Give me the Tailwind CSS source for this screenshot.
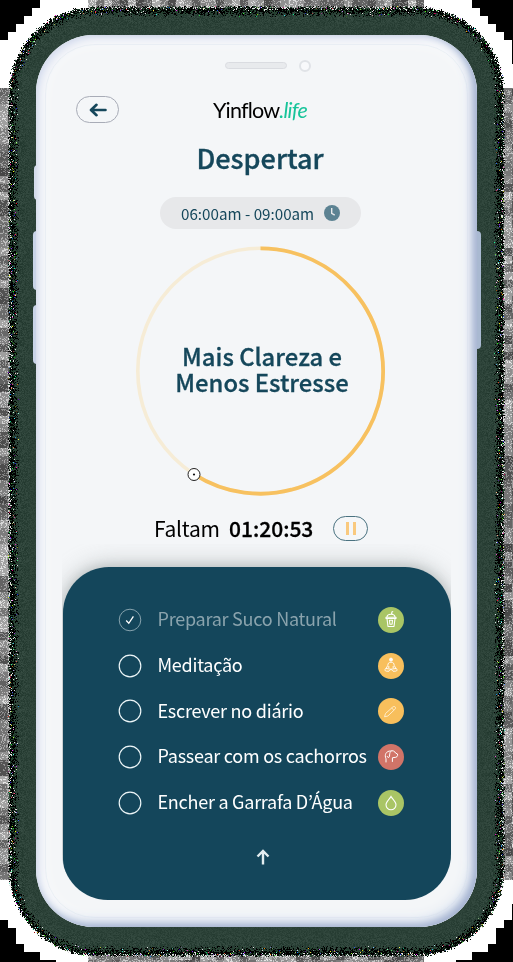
<!DOCTYPE html>
<html lang="pt-BR">
<head>
<meta charset="utf-8">
<title>Yinflow.life</title>
<script src="https://cdn.jsdelivr.net/npm/@tailwindcss/browser@4"></script>
</head>
<body class="relative h-[962px] w-[513px] overflow-hidden bg-[#2d443a] font-['Noto_Sans_CJK_JP','Noto_Sans',sans-serif]">
<canvas id="grain" width="513" height="962" class="absolute inset-0"></canvas>

<!-- side buttons -->
<i class="absolute left-[34px] top-[165px] h-[35px] w-1 rounded-l-sm bg-[#d4dcec]"></i>
<i class="absolute left-[33px] top-[231px] h-[59px] w-1 rounded-l-sm bg-[#c9d4e8]"></i>
<i class="absolute left-[33px] top-[305px] h-[59px] w-1 rounded-l-sm bg-[#c9d4e8]"></i>
<i class="absolute left-[475px] top-[231px] h-[118px] w-[6px] rounded-r-sm bg-[#a9b9d1]"></i>

<main class="relative ml-9 mt-[35px] flex h-[892px] w-[441px] flex-col rounded-[58px] bg-[#f4f6f8] shadow-[inset_-4px_-3px_7px_#a4b2d0,inset_-8px_-8px_12px_#d9e2ef,inset_4px_4px_7px_#dbe1f0,inset_0_0_24px_#fbfcff]">
  <div class="pointer-events-none absolute inset-[9px] rounded-[50px] border border-[#cbd5e8]/25"></div>

  <div class="flex h-[61px] items-start pl-[189px] pt-[26px]">
    <span class="mt-[1px] h-[7px] w-[62px] rounded-full border border-[#dadce1] bg-[#e8eaed]"></span>
    <span class="-mt-[1px] ml-[12px] size-[12px] rounded-full border-2 border-[#e0e3e7] bg-[#f8f9fb]"></span>
  </div>

  <header class="flex h-[27px] items-center pl-[41px]">
    <button class="-ml-[1px] flex h-[27px] w-[43px] items-center justify-center rounded-full border border-[#a8acb7]">
      <svg class="h-[14px] w-[18px]" viewBox="0 0 18 14" fill="none" stroke="#15475b" stroke-width="2.6" stroke-linecap="round" stroke-linejoin="round"><path d="M16.500 7H2.500M7.500 1.800 2 7l5.500 5.200"/></svg>
    </button>
    <div class="ml-[94px] mt-[2px] flex whitespace-nowrap font-['Lato',sans-serif] text-[21.5px] leading-[27px] tracking-[-0.8px] text-black"><span>Yinflow</span><span class="italic text-[#17c49a]">.life</span></div>
  </header>

  <h1 class="mt-[16px] h-[38px] pl-[7px] text-center text-[27px] font-medium leading-[38px] text-[#15475b] [-webkit-text-stroke:0.35px_#15475b]">Despertar</h1>

  <div class="ml-[124px] mt-[20px] flex h-[32px] w-[201px] items-center rounded-full bg-[#e7e8ea] pl-[21px] text-[15.2px] leading-8 text-[#15475b]">
    <span class="-mt-[1px] w-[143px] whitespace-nowrap">06:00am - 09:00am</span>
    <svg class="size-4" viewBox="0 0 16 16"><circle cx="8" cy="8" r="8" fill="#5c8292"/><path d="M7.700 3v5.300l3 1.800" fill="none" stroke="#e7e8ea" stroke-width="1.4"/></svg>
  </div>

  <section class="ml-[99px] mt-[17px] grid h-[251px] w-[252px] *:[grid-area:1/1]">
    <svg class="h-[251px] w-[252px]" viewBox="0 0 252 251" fill="none">
      <circle cx="125.500" cy="125" r="122.700" stroke="#f6ecd6" stroke-width="3.600"/>
      <path d="M125.500 2.300A122.700 122.700 0 1 1 59.200 228.300" stroke="#f7c160" stroke-width="3.800"/>
      <circle cx="59" cy="228.500" r="6" fill="#fff" stroke="#222" stroke-width="1"/>
      <circle cx="59" cy="228.500" r="1.100" fill="#111"/>
    </svg>
    <h2 class="-mt-[6px] self-center pl-[2px] text-center text-[23.8px] font-medium leading-[26px] text-[#15475b] [-webkit-text-stroke:0.3px_#15475b]">Mais Clareza e<br>Menos Estresse</h2>
  </section>

  <div class="ml-[118px] mt-[17px] flex h-[30px] items-center whitespace-nowrap text-[21px] leading-[30px] text-black">
    <span class="-mt-[2px] w-[75px] tracking-[-0.25px]">Faltam</span>
    <span class="-mt-[2px] w-[104px] font-medium [-webkit-text-stroke:0.3px_#000]">01:20:53</span>
    <button class="-mt-[1px] flex h-[25px] w-[35px] items-center justify-center gap-[4px] rounded-full border border-[#4a7280]">
      <i class="h-[13px] w-[3px] bg-[#f9c97e]"></i><i class="h-[13px] w-[3px] bg-[#f9c97e]"></i>
    </button>
  </div>

  <div class="ml-[26px] h-[356px] w-[389px] overflow-hidden rounded-b-[46px] pl-[1px] pt-[23px]">
    <section class="h-[333px] w-[388px] rounded-[46px] rounded-b-[40px] bg-[#14465b] pt-[30px] text-white shadow-[0_-2px_24px_#8b949477,0_0_12px_#70787855]">
      <ul class="flex flex-col pl-[55px] text-[18px] leading-[42px] tracking-[-0.25px]">
        <li class="flex h-[45.7px] items-center">
          <svg class="size-6" viewBox="0 0 24 24" fill="none"><circle cx="12" cy="12" r="10.8" stroke="#86a2ad"/><path d="m8.200 12.500 2.600 2.800 4.600-7" stroke="#fff" stroke-width="1.300"/></svg>
          <span class="-mt-[3px] ml-[15.5px] w-[220.5px] whitespace-nowrap text-[#8aa3ad]">Preparar Suco Natural</span>
          <svg class="size-[26px]" viewBox="0 0 26 26" fill="none" stroke="#fff" stroke-width="1.100" stroke-linejoin="round"><circle cx="13" cy="13" r="13" fill="#a9c565" stroke="none"/><path d="M8 11.500h10v-1.200H8zM9 10.200C9 6.200 17 6.200 17 10.200M13.800 7.200V5l1.400-.5M9 11.800l1 7.700h6l1-7.700M11.500 13.200h3l-.4 4h-2.200z"/></svg>
        </li>
        <li class="flex h-[45.7px] items-center">
          <svg class="size-6" viewBox="0 0 24 24" fill="none"><circle cx="12" cy="12" r="10.8" stroke="#edf6f8" stroke-width="1.2"/></svg>
          <span class="-mt-[3px] ml-[15.5px] w-[220.5px] whitespace-nowrap">Meditação</span>
          <svg class="size-[26px]" viewBox="0 0 26 26" fill="none" stroke="#fff" stroke-width=".9" stroke-linejoin="round"><circle cx="13" cy="13" r="13" fill="#f8bf5c" stroke="none"/><circle cx="13" cy="6.600" r="1.500" fill="#fff"/><path d="M13 9.200c-2.500 0-3 1.200-3.200 3.200L7.800 16M13 9.200c2.500 0 3 1.200 3.200 3.200l2 3.600M10.800 13v2.200M15.200 13v2.200M7.800 15.500c-1.400.9-.9 2.900.8 2.700h2.400l2-2 2 2h2.400c1.700.2 2.200-1.800.8-2.700L13 16.200z"/></svg>
        </li>
        <li class="flex h-[45.7px] items-center">
          <svg class="size-6" viewBox="0 0 24 24" fill="none"><circle cx="12" cy="12" r="10.8" stroke="#edf6f8" stroke-width="1.2"/></svg>
          <span class="-mt-[3px] ml-[15.5px] w-[220.5px] whitespace-nowrap">Escrever no diário</span>
          <svg class="size-[26px]" viewBox="0 0 26 26" fill="none" stroke="#fff1d5" stroke-width=".9" stroke-linejoin="round"><circle cx="13" cy="13" r="13" fill="#f8bf5c" stroke="none"/><path d="M6.500 18.800 7.500 15.500l7.200-6.400c1.800-1.600 3.900.4 2.200 2.200l-7 6.700zM13.700 10l2.200 2.200"/></svg>
        </li>
        <li class="flex h-[45.7px] items-center">
          <svg class="size-6" viewBox="0 0 24 24" fill="none"><circle cx="12" cy="12" r="10.8" stroke="#edf6f8" stroke-width="1.2"/></svg>
          <span class="-mt-[3px] ml-[15.5px] w-[220.5px] whitespace-nowrap">Passear com os cachorros</span>
          <svg class="size-[26px]" viewBox="0 0 26 26" fill="none" stroke="#fff" stroke-width="1" stroke-linejoin="round" stroke-linecap="round"><circle cx="13" cy="13" r="13" fill="#d17468" stroke="none"/><path d="M8 18v-3.200C6 10.400 8.500 7 12.500 7c2-.8 4.500.2 5 2l2 1c.6 2.400-.8 3.500-3.500 3.500l-1.600.3v3.700M12.700 7.500c-1.200 1-1 3-1.200 4.800-.4 1.700-2 1.500-2.300.2"/></svg>
        </li>
        <li class="flex h-[45.7px] items-center">
          <svg class="size-6" viewBox="0 0 24 24" fill="none"><circle cx="12" cy="12" r="10.8" stroke="#edf6f8" stroke-width="1.2"/></svg>
          <span class="-mt-[3px] ml-[15.5px] w-[220.5px] whitespace-nowrap">Encher a Garrafa D’Água</span>
          <svg class="size-[26px]" viewBox="0 0 26 26" fill="none" stroke="#fff" stroke-width="1.100"><circle cx="13" cy="13" r="13" fill="#a9c565" stroke="none"/><path d="M13 6.500c-1 2-5 5.100-5 8.300a5 5 0 0 0 10 0c0-3.200-4-6.300-5-8.300z"/></svg>
        </li>
      </ul>
      <svg class="ml-[192.5px] mt-[24px] h-[16px] w-[14px]" viewBox="0 0 14 16" fill="none" stroke="#e3edf0" stroke-width="2.4"><path d="M7 15.500V2.500M1.500 7.500 7 2l5.500 5.500"/></svg>
    </section>
  </div>
</main>

<script>
// Grainy green halo that breaks up into coarse blocks at its edge.
const c = document.getElementById('grain').getContext('2d');
const img = c.createImageData(513, 962);
let seed = 7;
const rnd = () => { seed = (seed * 1664525 + 1013904223) >>> 0; return seed / 4294967296; };
const depth = (x, y) => {
  const r = 88, qx = Math.abs(x - 256) - (249 - r), qy = Math.abs(y - 481) - (476 - r);
  return r - Math.hypot(Math.max(qx, 0), Math.max(qy, 0)) - Math.min(Math.max(qx, qy), 0);
};
const blocks = {};
for (let y = 0; y < 962; y++) for (let x = 0; x < 513; x++) {
  const d = depth(x, y), bx = x >> 3, by = y >> 3, key = by * 65 + bx;
  let p;
  if (d > 5 + rnd() * 7) { const n = (rnd() - .5) * Math.max(8, 38 - d); p = [44 + n, 66 + n, 56 + n]; }
  else if (d > rnd() * 3) {
    const q = rnd(), m = Math.max(0, 1 - d / 5);
    p = q < .05 ? [rnd() * 255, rnd() * 255, rnd() * 255] : q < .07 + m * .35 ? [225, 225, 225] : q < .7 ? [0, 0, 0] : [35, 66, 46];
  } else {
    if (!(key in blocks)) {
      const corner = depth(bx * 8 + 4, by * 8 + 4);
      const nearCorner = Math.abs(bx * 8 - 252) > 170 && Math.abs(by * 8 - 477) > 395;
      blocks[key] = corner < -16 ? 0 : nearCorner ? 255 : 70 + rnd() * 100;
    }
    const v = blocks[key], n = v && v < 255 && rnd() < .25 ? 60 : 0;
    p = [v + n, v + n, v + n];
  }
  const i = (y * 513 + x) * 4;
  img.data[i] = p[0]; img.data[i + 1] = p[1]; img.data[i + 2] = p[2]; img.data[i + 3] = 255;
}
c.putImageData(img, 0, 0);
</script>
</body>
</html>
